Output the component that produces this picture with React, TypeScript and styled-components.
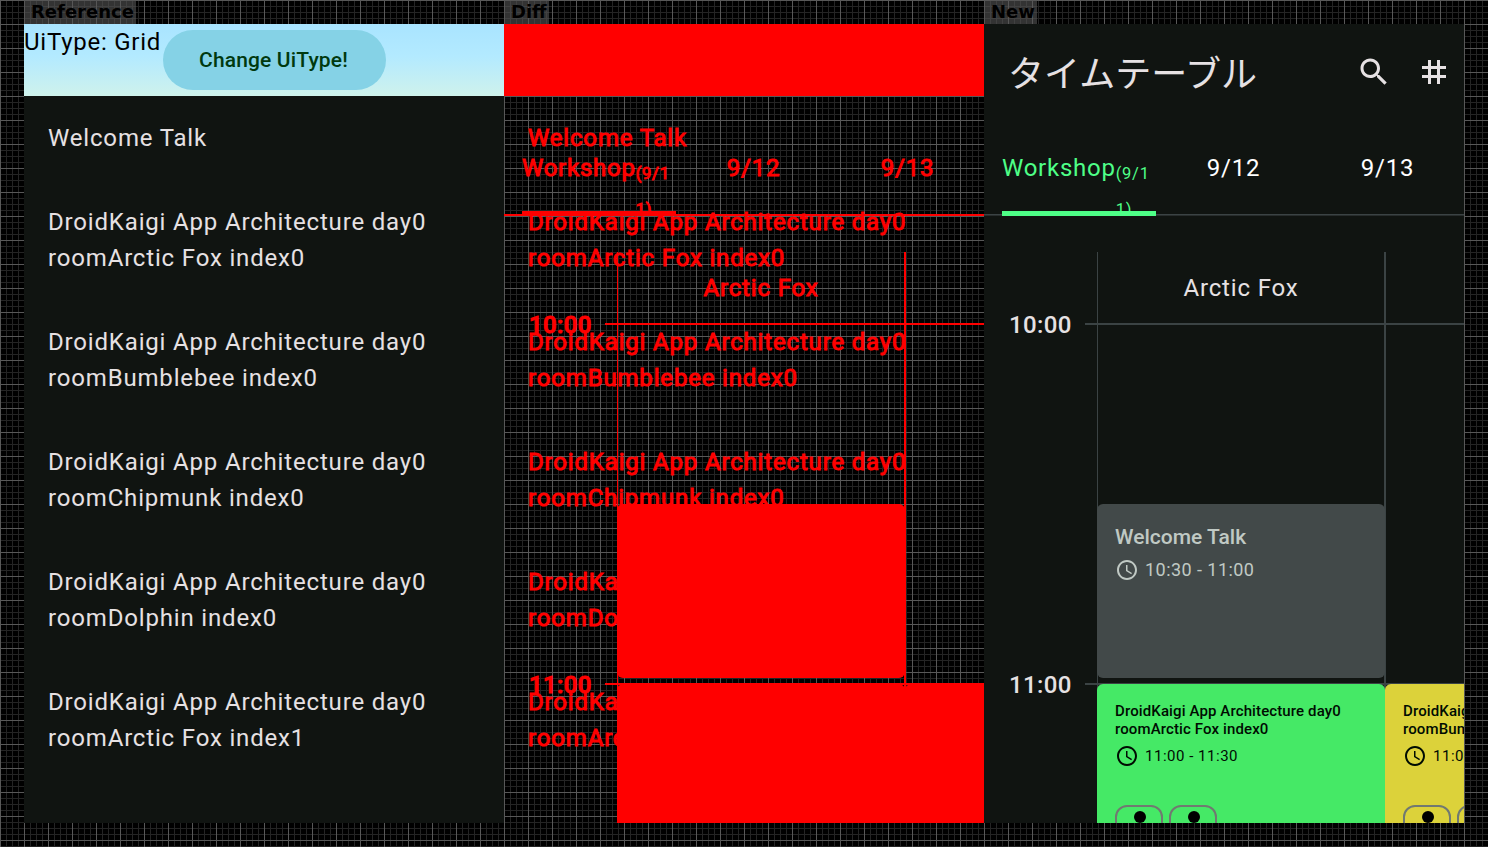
import React from "react";
import styled, { createGlobalStyle, css, ThemeProvider } from "styled-components";

const GlobalStyle = createGlobalStyle`
  body { margin: 0; background: #000; overflow: hidden; }
  * { box-sizing: border-box; }
`;

interface Palette {
  diff: boolean;
  surface: string;
  text: string;
  strong: string;
  accent: string;
  line: string;
  fade: string;
  stroke: string;
}

const darkTheme: Palette = {
  diff: false,
  surface: "#101411",
  text: "#e6e1e3",
  strong: "#ffffff",
  accent: "#4eff87",
  line: "#3b4344",
  fade: "#282d2d",
  stroke: "0",
};

const diffTheme: Palette = {
  diff: true,
  surface: "transparent",
  text: "#ff0000",
  strong: "#ff0000",
  accent: "#ff0000",
  line: "#ff0000",
  fade: "#ff0000",
  stroke: "1px #ff0000",
};

const Board = styled.main`
  width: 1488px;
  height: 847px;
  padding: 0 24px 24px;
  display: grid;
  grid-template-columns: repeat(3, 480px);
  background-color: #000;
  background-image:
    linear-gradient(to right, #585858 1px, transparent 1px),
    linear-gradient(to bottom, #585858 1px, transparent 1px),
    linear-gradient(to right, #242424 1px, transparent 1px),
    linear-gradient(to bottom, #242424 1px, transparent 1px);
  background-size: 24px 24px, 24px 24px, 6px 6px, 6px 6px;
`;

const Pane = styled.section`
  display: flex;
  flex-direction: column;
  align-items: flex-start;
  min-width: 0;
`;

const PaneLabel = styled.div`
  height: 24px;
  padding: 0 2px 0 7px;
  background: rgba(85, 85, 85, 0.6);
  color: #000;
  font: bold 18px/24px "DejaVu Sans", sans-serif;
`;

const Stack = styled.div`
  display: grid;
  grid-template: 799px / 480px;
  overflow: hidden;
`;

const Screen = styled.div`
  grid-area: 1 / 1;
  width: 480px;
  height: 799px;
  overflow: hidden;
  display: flex;
  flex-direction: column;
  background: ${({ theme }) => theme.surface};
  color: ${({ theme }) => theme.text};
  font: 400 24px/36px Roboto, sans-serif;
  letter-spacing: 0.75px;
  -webkit-text-stroke: ${({ theme }) => theme.stroke};
`;

const TypeBar = styled.header`
  height: 72px;
  flex: none;
  display: flex;
  align-items: flex-start;
  color: #000;
  background: linear-gradient(#a9e4ff 0%, #b3eaff 45%, #cff2ec 100%);
  ${({ theme }) => theme.diff && css`
    background: #ff0000;
    color: #ff0000;
  `}
`;

const TypeLabel = styled.span`
  width: 139px;
  white-space: nowrap;
`;

const TypeButton = styled.button`
  width: 223px;
  height: 60px;
  margin: 6px 0 0;
  padding: 0 2px 0 0;
  border: 0;
  border-radius: 30px;
  background: ${({ theme }) => (theme.diff ? "#ff0000" : "#85d2e6")};
  color: ${({ theme }) => (theme.diff ? "#ff0000" : "#00390f")};
  font: 500 21px/30px Roboto, sans-serif;
  letter-spacing: 0.15px;
`;

const SessionItem = styled.div`
  padding: 24px;
  flex: none;
  white-space: pre;
  letter-spacing: 0.83px;
`;

const TopBar = styled.header`
  height: 96px;
  flex: none;
  display: flex;
  align-items: center;
  padding: 0 12px 0 24px;
`;

const Title = styled.h1`
  margin: 0;
  padding-bottom: 2px;
  flex: 1;
  font: 400 36px/48px "Noto Sans CJK JP", sans-serif;
  letter-spacing: 0;
`;

const BarActions = styled.div`
  display: flex;
  gap: 24px;
`;

const Icon = styled.svg<{ $size: number }>`
  width: ${({ $size }) => $size}px;
  height: ${({ $size }) => $size}px;
  flex: none;
  fill: currentColor;
`;

const Tabs = styled.nav`
  height: 96px;
  flex: none;
  padding-left: 18px;
  display: grid;
  grid-template-columns: repeat(3, 154px);
  background: linear-gradient(${({ theme }) => theme.line}, ${({ theme }) => theme.line}) 0 94px / 100% 1px no-repeat,
    linear-gradient(${({ theme }) => theme.fade}, ${({ theme }) => theme.fade}) 0 95px / 100% 1px no-repeat;
`;

const Tab = styled.div<{ $selected?: boolean }>`
  height: 96px;
  padding: 30px 0 0 ${({ $selected }) => ($selected ? 0 : 1)}px;
  display: flex;
  justify-content: ${({ $selected }) => ($selected ? "flex-start" : "center")};
  overflow: hidden;
  color: ${({ theme, $selected }) => ($selected ? theme.accent : theme.strong)};
  background: ${({ theme, $selected }) =>
    $selected ? `linear-gradient(${theme.accent}, ${theme.accent}) 0 91px / 100% 5px no-repeat` : "none"};
`;

const TabDate = styled.small`
  width: 38px;
  height: 61px;
  padding-top: 6px;
  overflow: hidden;
  font-size: 16.5px;
  white-space: pre-line;
`;

const Timetable = styled.div`
  flex: 1;
  display: grid;
  grid-template-columns: 113px 367px;
  overflow: hidden;
`;

const Hours = styled.div`
  padding-top: 91px;
  display: flex;
  flex-direction: column;
  gap: 324px;
`;

const Hour = styled.div`
  height: 36px;
  padding-left: 25px;
  font-weight: 500;
  letter-spacing: 0.4px;
  display: flex;
  align-items: center;
  justify-content: space-between;
  &::after {
    content: "";
    width: 12px;
    height: 2px;
    margin-bottom: 2px;
    background: ${({ theme }) => theme.line};
  }
`;

const Rooms = styled.div`
  margin-top: 36px;
  display: flex;
  overflow: hidden;
  background:
    linear-gradient(${({ theme }) => theme.line}, ${({ theme }) => theme.line}) 0 71px / 100% 2px no-repeat,
    linear-gradient(${({ theme }) => theme.line}, ${({ theme }) => theme.line}) 0 431px / 100% 2px no-repeat,
    linear-gradient(${({ theme }) => theme.line}, ${({ theme }) => theme.line}) 0 0 / 1px 100% no-repeat,
    linear-gradient(${({ theme }) => theme.line}, ${({ theme }) => theme.line}) 287px 0 / 2px 100% no-repeat;
`;

const Room = styled.div`
  width: 288px;
  flex: none;
  display: flex;
  flex-direction: column;
`;

const RoomName = styled.div`
  height: 72px;
  line-height: 72px;
  flex: none;
  text-align: center;
  letter-spacing: 0.84px;
`;

const Slots = styled.div`
  display: grid;
  grid-template-rows: 174px 300px;
  gap: 6px;
  padding-top: 180px;
`;

const Card = styled.article<{ $bg: string; $fg: string; $compact?: boolean }>`
  grid-row: ${({ $compact }) => ($compact ? 2 : 1)};
  border-radius: 6px;
  padding: 18px;
  display: flex;
  flex-direction: column;
  background: ${({ theme, $bg }) => (theme.diff ? "#ff0000" : $bg)};
  color: ${({ theme, $fg }) => (theme.diff ? "#ff0000" : $fg)};
`;

const CardTitle = styled.div<{ $compact?: boolean }>`
  font-weight: 500;
  font-size: ${({ $compact }) => ($compact ? 15 : 21)}px;
  line-height: ${({ $compact }) => ($compact ? 18 : 30)}px;
  letter-spacing: ${({ $compact }) => ($compact ? 0.12 : 0.02)}px;
  white-space: pre;
`;

const CardTime = styled.div<{ $compact?: boolean }>`
  margin-top: 6px;
  display: flex;
  align-items: center;
  gap: 6px;
  height: 24px;
  font-size: ${({ $compact }) => ($compact ? 15 : 18)}px;
  letter-spacing: ${({ $compact }) => ($compact ? 0.52 : 0.45)}px;
  white-space: nowrap;
`;

const Speakers = styled.div`
  margin-top: 37px;
  display: flex;
  gap: 6px;
`;

const Avatar = styled.div`
  width: 48px;
  height: 48px;
  flex: none;
  border: 2px solid ${({ theme }) => (theme.diff ? "#ff0000" : "#717971")};
  border-radius: 12px;
  display: flex;
  justify-content: center;
  padding: 4px 0 0 1px;
  &::before {
    content: "";
    width: 12px;
    height: 12px;
    border-radius: 50%;
    background: ${({ theme }) => (theme.diff ? "#ff0000" : "#000")};
  }
`;

const SearchIcon = () => (
  <Icon $size={36} viewBox="0 0 24 24">
    <path d="M15.5 14h-.79l-.28-.27C15.41 12.59 16 11.11 16 9.5 16 5.91 13.09 3 9.5 3S3 5.91 3 9.5 5.91 16 9.5 16c1.61 0 3.09-.59 4.23-1.57l.27.28v.79l5 4.99L20.49 19l-4.99-5zm-6 0C7.01 14 5 11.99 5 9.5S7.01 5 9.5 5 14 7.01 14 9.5 11.99 14 9.5 14z" />
  </Icon>
);

const GridIcon = () => (
  <Icon $size={36} viewBox="0 0 24 24">
    <path d="M20 10V8h-4V4h-2v4h-4V4H8v4H4v2h4v4H4v2h4v4h2v-4h4v4h2v-4h4v-2h-4v-4h4zm-6 4h-4v-4h4v4z" />
  </Icon>
);

const ClockIcon = () => (
  <Icon $size={24} viewBox="0 0 24 24">
    <path d="M11.99 2C6.47 2 2 6.48 2 12s4.47 10 9.99 10C17.52 22 22 17.52 22 12S17.52 2 11.99 2zM12 20c-4.42 0-8-3.58-8-8s3.58-8 8-8 8 3.58 8 8-3.58 8-8 8zm.5-13H11v6l5.25 3.15.75-1.23-4.5-2.67z" />
  </Icon>
);

const sessions = [
  "Welcome Talk",
  "DroidKaigi App Architecture day0\nroomArctic Fox index0",
  "DroidKaigi App Architecture day0\nroomBumblebee index0",
  "DroidKaigi App Architecture day0\nroomChipmunk index0",
  "DroidKaigi App Architecture day0\nroomDolphin index0",
  "DroidKaigi App Architecture day0\nroomArctic Fox index1",
];

const ListScreen = () => (
  <Screen>
    <TypeBar>
      <TypeLabel>UiType: Grid</TypeLabel>
      <TypeButton>Change UiType!</TypeButton>
    </TypeBar>
    {sessions.map((s) => (
      <SessionItem key={s}>{s}</SessionItem>
    ))}
  </Screen>
);

const TalkCard = ({ room, color }: { room: string; color: string }) => (
  <Card $bg={color} $fg="#000c02" $compact>
    <CardTitle $compact>{`DroidKaigi App Architecture day0\nroom${room} index0`}</CardTitle>
    <CardTime $compact>
      <ClockIcon />
      11:00 - 11:30
    </CardTime>
    <Speakers>
      <Avatar />
      <Avatar />
    </Speakers>
  </Card>
);

const GridScreen = () => (
  <Screen>
    <TopBar>
      <Title>タイムテーブル</Title>
      <BarActions>
        <SearchIcon />
        <GridIcon />
      </BarActions>
    </TopBar>
    <Tabs>
      <Tab $selected>
        Workshop<TabDate>{"(9/1\n1)"}</TabDate>
      </Tab>
      <Tab>9/12</Tab>
      <Tab>9/13</Tab>
    </Tabs>
    <Timetable>
      <Hours>
        <Hour>10:00</Hour>
        <Hour>11:00</Hour>
      </Hours>
      <Rooms>
        <Room>
          <RoomName>Arctic Fox</RoomName>
          <Slots>
            <Card $bg="#424949" $fg="#c0c9c4">
              <CardTitle>Welcome Talk</CardTitle>
              <CardTime>
                <ClockIcon />
                10:30 - 11:00
              </CardTime>
            </Card>
            <TalkCard room="Arctic Fox" color="#45e966" />
          </Slots>
        </Room>
        <Room>
          <RoomName />
          <Slots>
            <TalkCard room="Bumblebee" color="#dcd23a" />
          </Slots>
        </Room>
      </Rooms>
    </Timetable>
  </Screen>
);

export default function App() {
  return (
    <ThemeProvider theme={darkTheme}>
      <GlobalStyle />
      <Board>
        <Pane>
          <PaneLabel>Reference</PaneLabel>
          <ListScreen />
        </Pane>
        <Pane>
          <PaneLabel>Diff</PaneLabel>
          <ThemeProvider theme={diffTheme}>
            <Stack>
              <ListScreen />
              <GridScreen />
            </Stack>
          </ThemeProvider>
        </Pane>
        <Pane>
          <PaneLabel>New</PaneLabel>
          <GridScreen />
        </Pane>
      </Board>
    </ThemeProvider>
  );
}
